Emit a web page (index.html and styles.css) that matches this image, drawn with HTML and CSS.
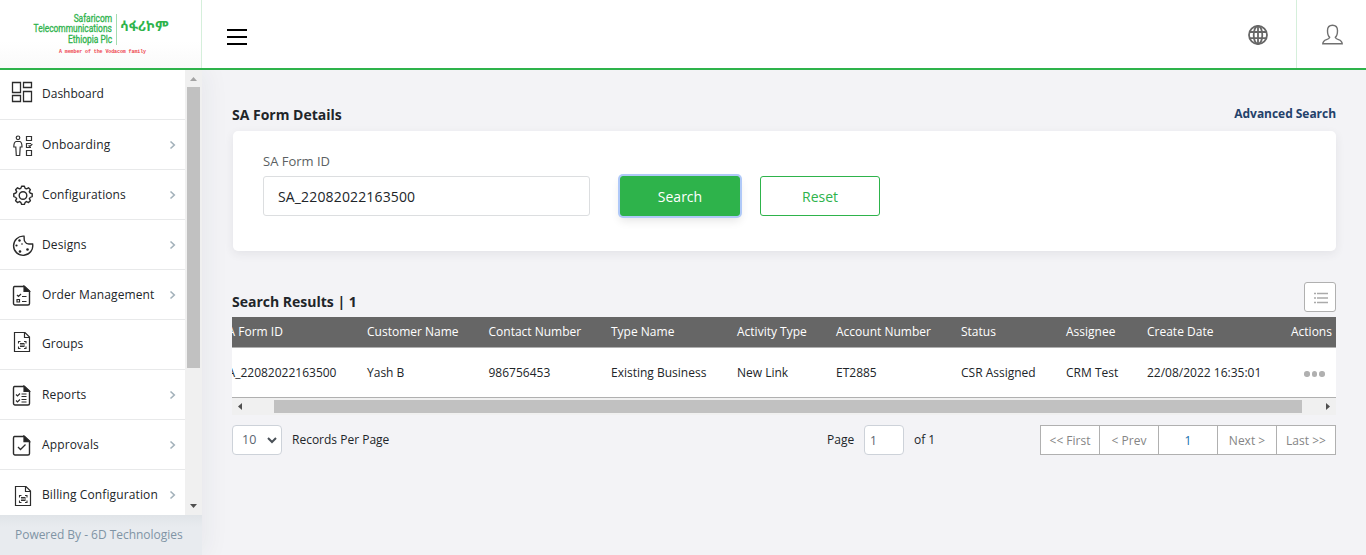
FILE: index.html
```html
<!DOCTYPE html>
<html lang="en">
<head>
<meta charset="utf-8">
<title>SA Form Details</title>
<link rel="stylesheet" href="styles.css">
</head>
<body>
<svg class="defs" width="0" height="0">
  <symbol id="chev" viewBox="0 0 8 10"><path d="M1.500 1.500 5.300 5 1.500 8.500" fill="none" stroke="#a3b1ba" stroke-width="1.600"/></symbol>
  <symbol id="check-doc" viewBox="0 0 22 22"><path d="M2.500 1.500h10l5 4.500v12.500a1.500 1.500 0 0 1-1.500 1.500H3A1.500 1.500 0 0 1 1.500 18.500v-15.500A1.500 1.500 0 0 1 2.500 1.500z" fill="none" stroke="#2b2b2b" stroke-width="1.400" stroke-linejoin="round"/><path d="M12 1v5.500h5.500z" fill="#222"/></symbol>
  <symbol id="scan-doc" viewBox="0 0 22 22"><path d="M1.500 1.500h10.500l4.500 4.500v14.500h-15z M11.500 1.500v5h5" fill="none" stroke="#2b2b2b" stroke-width="1.200"/><path d="M5.500 12.500V10.500h2M11 10.500h2v2M5.500 15.500v2h2M11 17.500h2v-2M7 12.500h4.500M7 14h5M7 15.500h4.500" fill="none" stroke="#333" stroke-width="1.100"/></symbol>
</svg>
<header class="top">
  <div class="brand">
    <div class="brand-main"><span>Safaricom</span><span>Telecommunications</span><span>Ethiopia Plc</span></div>
    <div class="brand-amh" lang="am">ሳፋሪኮም</div>
    <div class="brand-tag">A member of the Vodacom family</div>
  </div>
  <div class="burger"><i></i><i></i><i></i></div>
  <div class="lang"><svg width="20" height="20" viewBox="0 0 20 20" fill="none" stroke="#666" stroke-width="1.800"><circle cx="10" cy="10" r="9"/><ellipse cx="10" cy="10" rx="4.300" ry="9"/><path d="M10 1v18M1.800 7h16.400M1.800 13.200h16.400"/></svg></div>
  <div class="user"><svg width="21" height="21" viewBox="0 0 21 21" fill="none" stroke="#707070" stroke-width="1.400"><path d="M7.700 13.400C6 12 5.500 10 5.500 6.500 5.500 3 7.300 1.200 10.500 1.200s5 1.800 5 5.300c0 3.500-.5 5.500-2.200 6.900.3 1.100 1.300 1.600 3.200 2.200 2.400.8 3.600 1.700 3.700 4.200H.8c.1-2.500 1.300-3.400 3.700-4.200 1.900-.6 2.900-1.100 3.200-2.200z"/></svg></div>
</header>
<div class="shell">
  <aside class="side">
    <div class="menu-wrap">
      <nav class="menu">
        <a class="item dash"><svg class="ico" viewBox="0 0 22 22" fill="none" stroke="#2b2b2b" stroke-width="1.300"><path d="M1.500 1.500h8v10H1.500zM12.500 1.500h8v5h-8zM1.500 14.500h8v6H1.500zM12.500 10.500h8v10h-8z"/></svg><span>Dashboard</span></a>
        <a class="item"><svg class="ico" viewBox="0 0 22 22" fill="none" stroke="#333" stroke-width="1.200"><circle cx="6" cy="2.800" r="1.800"/><path d="M4 6.500h4c1.500.5 2 2 2 5.500H8.200L7.700 20.500H4.300L3.800 12H1.800c0-3.500.3-5 2.200-5.500zM14.500 1.500h5v4h-5zM14.500 15.500h5v5h-5zM19 8.500h-4.500v4h4.500M16.500 10.500l1.300 1 2.500-2.500"/></svg><span>Onboarding</span><svg class="chev"><use href="#chev"/></svg></a>
        <a class="item"><svg class="ico" viewBox="0 0 22 22" fill="none" stroke="#2b2b2b" stroke-width="1.400" stroke-linejoin="round"><path d="M9.600 1.300h2.800q.4 2.300 2.100 2.600l2-1.100 1.900 1.900-1.100 2q.5 1.700 2.900 2.100v2.800q-2.400.4-2.900 2.100l1.100 2-1.900 1.900-2-1.100q-1.700.5-2.100 2.900H9.600q-.4-2.400-2.100-2.900l-2 1.100-1.900-1.900 1.100-2q-.5-1.700-2.900-2.100V8.800q2.400-.4 2.900-2.100l-1.100-2 1.900-1.900 2 1.100q1.700-.3 2.100-2.600z"/><circle cx="11" cy="10.500" r="3.800"/></svg><span>Configurations</span><svg class="chev"><use href="#chev"/></svg></a>
        <a class="item"><svg class="ico" viewBox="0 0 22 22" fill="none" stroke="#2b2b2b" stroke-width="1.400"><path d="M12 1.200A9.600 9.600 0 1 0 20.600 9h-3.700c-2 0-3-.5-3.700-2C11.500 6 12.500 3 12 1.200z"/><g fill="#222" stroke="none"><circle cx="7.500" cy="5.500" r="1.200"/><circle cx="4.500" cy="10.500" r="1.100"/><circle cx="8" cy="16.500" r="1.300"/><circle cx="10" cy="9" r=".8"/><circle cx="15.500" cy="14.500" r="1.300"/></g></svg><span>Designs</span><svg class="chev"><use href="#chev"/></svg></a>
        <a class="item"><svg class="ico" viewBox="0 0 22 22" fill="none" stroke="#2b2b2b" stroke-width="1.200"><use href="#check-doc"/><path d="M5 10l1.500 1.500 2.500-2.500M10 11.500h4.500M10 16.500h4.500M5 14.500h2.500v2.500H5z"/></svg><span>Order Management</span><svg class="chev"><use href="#chev"/></svg></a>
        <a class="item groups"><svg class="ico" viewBox="0 0 22 22"><use href="#scan-doc"/></svg><span>Groups</span></a>
        <a class="item"><svg class="ico" viewBox="0 0 22 22" fill="none" stroke="#2b2b2b" stroke-width="1.200"><use href="#check-doc"/><path d="M4 9.500l1.500 1.500 2.500-2.500M4 15.500l1.500 1.500 2.500-2.500M9.500 9h5M9.500 11.500h5M9.500 14.500h5M9.500 17h5"/></svg><span>Reports</span><svg class="chev"><use href="#chev"/></svg></a>
        <a class="item"><svg class="ico" viewBox="0 0 22 22" fill="none" stroke="#2b2b2b" stroke-width="1.300"><use href="#check-doc"/><path d="M6 12l2.500 2.500 5-5"/></svg><span>Approvals</span><svg class="chev"><use href="#chev"/></svg></a>
        <a class="item bill"><svg class="ico" viewBox="0 0 22 22"><use href="#scan-doc"/></svg><span>Billing Configuration</span><svg class="chev"><use href="#chev"/></svg></a>
      </nav>
      <div class="vbar"><svg width="17" height="17"><path d="M5 11l3.500-4 3.500 4z" fill="#a3a3a3"/></svg><i></i><svg width="17" height="17"><path d="M5 6h7l-3.500 4z" fill="#505050"/></svg></div>
    </div>
    <div class="powered">Powered By - 6D Technologies</div>
  </aside>
  <main class="main">
    <div class="title-row"><h2>SA Form Details</h2><a class="adv">Advanced Search</a></div>
    <section class="card">
      <div class="field"><label>SA Form ID</label><div class="input">SA_22082022163500</div></div>
      <button class="btn primary">Search</button>
      <button class="btn outline">Reset</button>
    </section>
    <div class="result-row"><h2>Search Results | 1</h2><div class="list-btn"><svg width="14" height="12" viewBox="0 0 14 12" stroke="#aaa" stroke-width="1.300"><path d="M0 1.500h2M3 1.500h11M0 6h2M3 6h11M0 10.500h2M3 10.500h11"/></svg></div></div>
    <div class="table">
      <div class="tr th"><span>SA Form ID</span><span>Customer Name</span><span>Contact Number</span><span>Type Name</span><span>Activity Type</span><span>Account Number</span><span>Status</span><span>Assignee</span><span>Create Date</span><span>Actions</span></div>
      <div class="tr td"><span>SA_22082022163500</span><span>Yash B</span><span>986756453</span><span>Existing Business</span><span>New Link</span><span>ET2885</span><span>CSR Assigned</span><span>CRM Test</span><span>22/08/2022 16:35:01</span><span class="dots"><i></i><i></i><i></i></span></div>
      <div class="hbar"><svg width="17" height="17"><path d="M10 5v7L6 8.500z" fill="#505050"/></svg><i></i><svg width="17" height="17"><path d="M7 5v7l4-3.500z" fill="#505050"/></svg></div>
    </div>
    <div class="pager">
      <div class="select"><span>10</span><svg width="10" height="7" viewBox="0 0 10 7"><path d="M1 1l4 4 4-4" fill="none" stroke="#495057" stroke-width="2"/></svg></div>
      <span class="rpp">Records Per Page</span>
      <span class="page-label">Page</span><div class="page-input">1</div><span class="of">of 1</span>
      <div class="pages"><a>&lt;&lt; First</a><a>&lt; Prev</a><a class="cur">1</a><a>Next &gt;</a><a>Last &gt;&gt;</a></div>
    </div>
  </main>
</div>
</body>
</html>
```
FILE: styles.css
```css
* { box-sizing: border-box; }
body { margin: 0; height: 555px; overflow: hidden; display: flex; flex-direction: column; background: #f3f3f6; color: #212529; font: 12px/18px "Open Sans", "Noto Sans", sans-serif; }
.defs { position: absolute; }
h2 { margin: 0; font-size: 14px; line-height: 20px; font-weight: 700; color: #212529; }

.top { height: 70px; flex: none; display: flex; background: #fff; border-bottom: 2px solid #2eb34b; position: relative; }
.brand { width: 202px; border-right: 1px solid #d5efdb; background: linear-gradient(#fff 60%, #fafafa); display: grid; grid-template-columns: 112px 1fr; grid-template-rows: 31px 10px; padding-top: 14px; align-content: start; color: #2eb34b; }
.brand-main { display: flex; flex-direction: column; align-items: flex-end; font: 10.500px/10.300px Roboto, sans-serif; white-space: nowrap; -webkit-text-stroke: .3px; }
.brand-main span { transform: scaleX(.8); transform-origin: right; }
.brand-amh { margin-left: 4px; border-left: 1px solid #a5dcb1; padding-left: 3px; font: bold 13.500px/25px "Noto Sans Ethiopic", "Noto Sans", sans-serif; white-space: nowrap; }
.brand-tag { grid-column: 1 / 3; padding-left: 59px; font: bold 5px/14px "Liberation Mono", monospace; color: #ee4550; white-space: nowrap; letter-spacing: -.1px; }
.burger { margin: 29px auto 0 25px; width: 20px; display: flex; flex-direction: column; gap: 5px; }
.burger i { height: 2px; background: #000; }
.lang { width: 48px; padding: 25px 0 0 0; }
.user { width: 70px; border-left: 1px solid #d5efdb; padding: 24px 0 0 25px; }

.shell { flex: 1; display: flex; min-height: 0; }
.side { width: 202px; flex: none; display: flex; flex-direction: column; box-shadow: 4px 0 24px rgba(40, 45, 60, .06); }
.menu-wrap { height: 445px; display: flex; }
.menu { width: 185px; height: 445px; overflow: hidden; background: #fff; }
.item { height: 50px; display: flex; align-items: center; padding: 0 8px 0 12px; border-bottom: 1px solid #e8e9ea; font-size: 12px; white-space: nowrap; }
.item span { margin-left: 8px; flex: 1; letter-spacing: .12px; padding-top: 1px; }
.ico { width: 22px; height: 22px; flex: none; position: relative; top: 1.500px; }
.chev { width: 8px; height: 10px; }
.dash .ico { top: -2.500px; left: -1px; }
.dash span { padding: 0 0 2px; letter-spacing: 0; }
.groups .ico { top: -2.500px; left: 1px; }
.groups span { padding: 0 0 1px; letter-spacing: 0; }
.bill .ico { left: 2px; }
.vbar { width: 17px; background: #f0f0f0; display: flex; flex-direction: column; justify-content: space-between; }
.vbar i { width: 13px; height: 281px; margin: 0 auto auto; background: #c1c1c1; }
.powered { flex: 1; background: linear-gradient(#e0e4e8, #e8ebef 12px); padding: 11px 0 0 15px; color: #8094a5; font-size: 12px; letter-spacing: -.03px; white-space: nowrap; }

.main { flex: 1; min-width: 0; padding: 35px 30px 0 30px; }
.title-row { display: flex; justify-content: space-between; height: 26px; }
.adv { font-weight: 700; letter-spacing: -.04px; color: #23416a; }
.card { height: 120px; background: #fff; border-radius: 5px; margin-left: 1px; display: flex; align-items: flex-start; padding: 20px 30px; box-shadow: 0 3px 10px rgba(50, 55, 70, .08); }
.field { width: 327px; margin-right: 30px; }
.field label { display: block; font-size: 13px; line-height: 20px; height: 25px; color: #5b5f63; }
.input { height: 40px; border: 1px solid #dcdee0; border-radius: 3px; padding: 0 14px; font-size: 14px; line-height: 40px; letter-spacing: .15px; }
.btn { width: 120px; height: 40px; margin: 25px 20px 0 0; border: 1px solid #2eb34b; border-radius: 3px; padding: 2px 0 0; font: 14px/20px "Open Sans", sans-serif; }
.primary { background: #2eb34b; color: #fff; box-shadow: 0 0 0 2px #b0c9f8, 0 5px 10px rgba(0, 0, 0, .1); }
.outline { background: #fff; color: #2eb34b; }

.result-row { display: flex; justify-content: space-between; margin-top: 31px; height: 35px; }
.result-row h2 { padding-top: 10px; }
.list-btn { width: 32px; height: 30px; border: 1px solid #b0b0b0; border-radius: 3px; background: #fff; display: grid; place-items: center; padding: 1px 0 0 1px; }

.table { overflow: hidden; }
.tr { display: grid; grid-template-columns: 135px 121.500px 122.500px 126px 99px 125px 105px 81px 144px 1fr; align-items: center; white-space: nowrap; }
.tr span:first-child { text-indent: -11px; }
.th { height: 31px; background: #666; color: #fff; border-bottom: 1px solid #b0b0b0; padding-bottom: 1px; }
.td { height: 50px; background: #fff; border-bottom: 1px solid #b0b0b0; }
.dots { display: flex; gap: 2px; padding: 3px 0 0 13px; }
.dots i { width: 5.500px; height: 5.500px; border-radius: 50%; background: #b0b0b0; }
.hbar { height: 17px; background: #f0f0f0; display: flex; align-items: center; justify-content: space-between; }
.hbar i { width: 1028px; height: 13px; margin-left: 25px; margin-right: auto; background: #c1c1c1; }

.pager { display: flex; align-items: center; margin-top: 10px; height: 30px; }
.select { width: 50px; height: 30px; border: 1px solid #cdd2d9; border-radius: 4px; background: #fff; display: flex; align-items: center; padding: 0 4px 0 9px; justify-content: space-between; font-size: 12.500px; color: #5c6570; }
.rpp { margin-left: 10px; width: 535px; }
.page-input { margin: 0 10px; width: 40px; height: 30px; border: 1px solid #cdd2d9; border-radius: 4px; background: #fff; padding-left: 5px; line-height: 29px; color: #5c6570; }
.page-label { width: 27px; }
.pages { margin-left: auto; display: flex; background: #fff; border: 1px solid #b0b0b0; }
.pages a { width: 59px; height: 28px; line-height: 29px; text-align: center; color: #858585; border-right: 1px solid #b0b0b0; }
.pages a:last-child { border-right: 0; width: 58px; }
.pages .cur { color: #146fae; }
```
